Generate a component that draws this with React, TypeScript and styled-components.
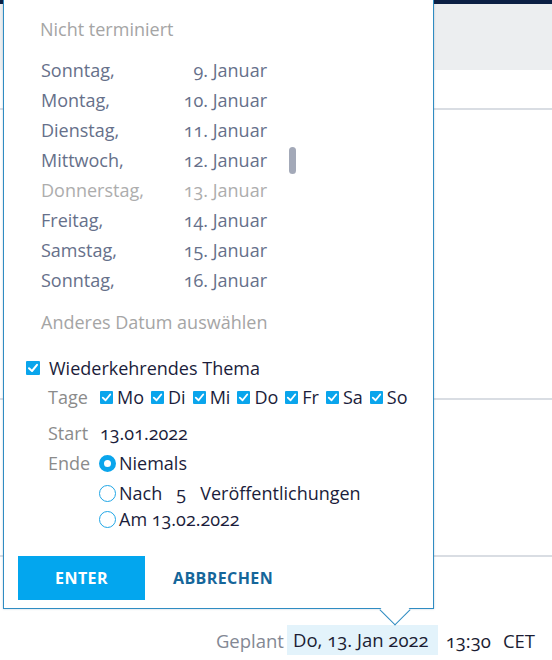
import React from "react";
import styled, { createGlobalStyle } from "styled-components";

const GlobalStyle = createGlobalStyle`
  body {
    margin: 0;
    font-family: "Open Sans", "Liberation Sans", sans-serif;
    background: #fff;
  }
`;

const days = [
  { name: "Sonntag,", date: "9. Januar" },
  { name: "Montag,", date: "10. Januar" },
  { name: "Dienstag,", date: "11. Januar" },
  { name: "Mittwoch,", date: "12. Januar" },
  { name: "Donnerstag,", date: "13. Januar", muted: true },
  { name: "Freitag,", date: "14. Januar" },
  { name: "Samstag,", date: "15. Januar" },
  { name: "Sonntag,", date: "16. Januar" },
];

const weekDays = ["Mo", "Di", "Mi", "Do", "Fr", "Sa", "So"];

const Check: React.FC<{ size: number }> = ({ size }) => (
  <CheckBox $size={size}>
    <svg width={size} height={size} viewBox="0 0 14 14">
      <polyline
        points="3,7.2 6,10 11,3.8"
        fill="none"
        stroke="#fff"
        strokeWidth="2"
        strokeLinecap="round"
        strokeLinejoin="round"
      />
    </svg>
  </CheckBox>
);

const App: React.FC = () => {
  return (
    <>
      <GlobalStyle />
      <Page>
        <TopBar />
        <GrayBand />
        <Band $height={38} />
        <Band $height={288} />
        <Band $height={155} />
        <Footer>
          <FooterLabel>Geplant</FooterLabel>
          <DateChip>Do, 13. Jan 2022</DateChip>
          <FooterValue>13:30</FooterValue>
          <FooterValue>CET</FooterValue>
        </Footer>

        <Popup>
          <Heading>Nicht terminiert</Heading>
          <DayList>
            {days.map((d, i) => (
              <DayRow key={i} $muted={d.muted}>
                <span>{d.name}</span>
                <DayDate>{d.date}</DayDate>
              </DayRow>
            ))}
            <Thumb />
          </DayList>
          <OtherDate>Anderes Datum auswählen</OtherDate>

          <Recurring>
            <Check size={14} />
            <span>Wiederkehrendes Thema</span>
          </Recurring>

          <Field $top={5}>
            <FieldLabel>Tage</FieldLabel>
            <DayChecks>
              {weekDays.map((w) => (
                <DayCheck key={w}>
                  <Check size={13} />
                  <span>{w}</span>
                </DayCheck>
              ))}
            </DayChecks>
          </Field>

          <Field $top={12}>
            <FieldLabel>Start</FieldLabel>
            <FieldValue>13.01.2022</FieldValue>
          </Field>

          <Field $top={6}>
            <FieldLabel>Ende</FieldLabel>
            <RadioOption>
              <Radio $on />
              <span>Niemals</span>
            </RadioOption>
          </Field>

          <Field $top={6}>
            <span />
            <RadioOption>
              <Radio />
              <span>Nach</span>
              <CountInput>5</CountInput>
              <span>Veröffentlichungen</span>
            </RadioOption>
          </Field>

          <Field $top={2}>
            <span />
            <RadioOption>
              <Radio />
              <span>Am 13.02.2022</span>
            </RadioOption>
          </Field>

          <Actions>
            <PrimaryButton>ENTER</PrimaryButton>
            <TextButton>ABBRECHEN</TextButton>
          </Actions>
        </Popup>
      </Page>
    </>
  );
};

const Page = styled.div`
  position: relative;
  width: 552px;
  height: 660px;
  overflow: hidden;
  font-variant-numeric: oldstyle-nums;
`;

const TopBar = styled.div`
  height: 4px;
  background: #0c1f44;
`;

const GrayBand = styled.div`
  height: 66px;
  background: #eceef0;
`;

const Band = styled.div<{ $height: number }>`
  height: ${(p) => p.$height}px;
  border-bottom: 2px solid #d9dde3;
`;

const Footer = styled.div`
  display: flex;
  justify-content: flex-end;
  align-items: center;
  padding: 68px 17px 0 0;
  font-size: 18.5px;
  color: #1b1d33;
`;

const FooterLabel = styled.span`
  color: #838894;
  margin-right: 3px;
`;

const DateChip = styled.span`
  background: #e3f3fb;
  height: 30px;
  line-height: 30px;
  padding: 0 9px 0 6px;
  margin-right: 8px;
`;

const FooterValue = styled.span`
  margin-right: 12px;
  &:last-child {
    margin-right: 0;
  }
`;

const Popup = styled.div`
  position: absolute;
  left: 3px;
  top: -1px;
  width: 429px;
  height: 608px;
  background: #fff;
  border: 1px solid #2f8cc2;
  box-shadow: 0 0 2px rgba(20, 60, 100, 0.25);
  font-size: 18px;
  color: #1b1d3b;

  &::after {
    content: "";
    position: absolute;
    left: 380px;
    top: 599px;
    width: 21px;
    height: 21px;
    background: #fff;
    border-right: 1px solid #2f8cc2;
    border-bottom: 1px solid #2f8cc2;
    transform: rotate(45deg);
  }
`;

const Heading = styled.div`
  margin: 17px 0 0 36px;
  line-height: 24px;
  color: #a5a5a5;
`;

const DayList = styled.div`
  position: relative;
  margin: 14px 0 0 37px;
  width: 226px;
`;

const DayRow = styled.div<{ $muted?: boolean }>`
  display: flex;
  justify-content: space-between;
  height: 30px;
  line-height: 30px;
  color: ${(p) => (p.$muted ? "#adadad" : "#66708a")};
`;

const DayDate = styled.span`
  text-align: right;
`;

const Thumb = styled.div`
  position: absolute;
  left: 248px;
  top: 92px;
  width: 7px;
  height: 27px;
  border-radius: 4px;
  background: #a3a9b8;
`;

const OtherDate = styled.div`
  margin: 15px 0 0 37px;
  line-height: 24px;
  color: #a5a5a5;
`;

const Recurring = styled.label`
  display: flex;
  align-items: center;
  gap: 9px;
  margin: 22px 0 0 22px;
  line-height: 24px;
`;

const CheckBox = styled.span<{ $size: number }>`
  display: inline-flex;
  flex: none;
  width: ${(p) => p.$size}px;
  height: ${(p) => p.$size}px;
  background: #0aa5ec;
  border-radius: 1px;
`;

const Field = styled.div<{ $top: number }>`
  display: grid;
  grid-template-columns: 52px 1fr;
  align-items: center;
  margin: ${(p) => p.$top}px 0 0 44px;
  line-height: 24px;
`;

const FieldLabel = styled.span`
  color: #8b8b8b;
`;

const FieldValue = styled.span``;

const DayChecks = styled.div`
  display: flex;
  gap: 7px;
`;

const DayCheck = styled.label`
  display: flex;
  align-items: center;
  gap: 4px;
`;

const RadioOption = styled.label`
  display: flex;
  align-items: center;
  gap: 3px;
  margin-left: -1px;
`;

const Radio = styled.span<{ $on?: boolean }>`
  flex: none;
  box-sizing: border-box;
  width: 17px;
  height: 17px;
  border-radius: 50%;
  border: ${(p) => (p.$on ? "5px solid #0aa5ec" : "1.5px solid #1fa6e6")};
  background: #fff;
`;

const CountInput = styled.span`
  display: inline-block;
  width: 32px;
  text-align: center;
`;

const Actions = styled.div`
  display: flex;
  align-items: center;
  margin: 25px 0 0 14px;
`;

const PrimaryButton = styled.button`
  width: 127px;
  height: 44px;
  border: none;
  background: #03a6ee;
  color: #fff;
  font: 700 16px "Open Sans", "Liberation Sans", sans-serif;
  letter-spacing: 0.4px;
`;

const TextButton = styled.button`
  height: 44px;
  border: none;
  background: none;
  padding: 0 28px;
  color: #15669a;
  font: 700 16px "Open Sans", "Liberation Sans", sans-serif;
  letter-spacing: 0.4px;
`;

export default App;
